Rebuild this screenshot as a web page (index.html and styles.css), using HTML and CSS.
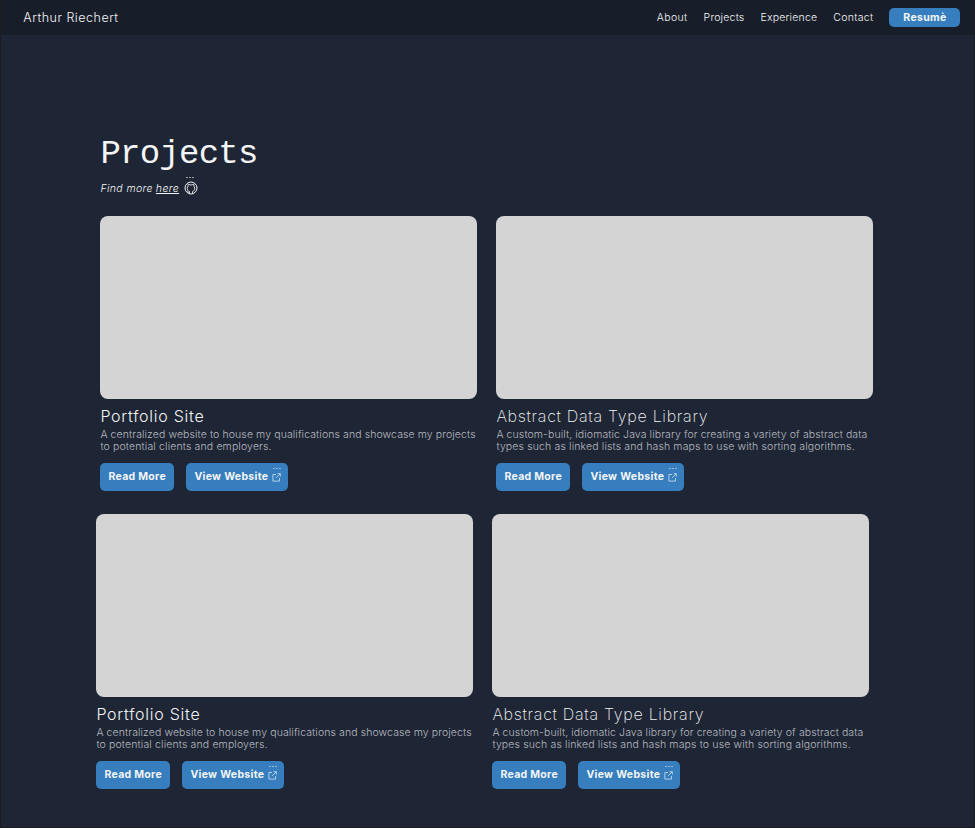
FILE: index.html
```
<!DOCTYPE html>
<html lang="en">
<head>
<meta charset="utf-8">
<title>Arthur Riechert - Projects</title>
<link rel="stylesheet" href="styles.css">
</head>
<body>
<svg class="defs" aria-hidden="true">
  <symbol id="external" viewBox="0 0 9 9"><path d="M4 1.500H.9v6.600h6.600V5M5.500.7h2.800v2.800M8.200.8 4.100 4.900" fill="none" stroke="currentColor" stroke-width=".8"/></symbol>
</svg>
<header class="nav">
  <span class="brand">Arthur Riechert</span>
  <nav class="links">
    <a class="link about">About</a><a class="link">Projects</a><a class="link">Experience</a><a class="link contact">Contact</a>
    <a class="resume">Resumè</a>
  </nav>
</header>
<main class="main">
  <h1 class="title">Projects</h1>
  <p class="more"><span>Find more</span><a class="here">here</a>
    <span class="github"><svg viewBox="0 0 14 14"><circle cx="7" cy="7" r="6" fill="none" stroke="currentColor" stroke-width="1"/><path d="M5.400 12.700v-2.300C3.900 10 3.300 8.900 3.300 7.300c0-.9.3-1.600.8-2.100-.2-.7-.1-1.400.1-2 .7 0 1.300.3 1.800.7h2c.5-.4 1.100-.7 1.800-.7.2.6.3 1.300.1 2 .5.5.8 1.200.8 2.100 0 1.600-.6 2.700-2.100 3.100v2.300M5.400 11.300c-1.100.3-1.500-.4-2.100-1" fill="none" stroke="currentColor" stroke-width=".9"/></svg><i class="dots"></i></span>
  </p>
  <section class="grid">
    <article class="card">
      <div class="thumb"></div>
      <h2 class="name">Portfolio Site</h2>
      <p class="desc">A centralized website to house my qualifications and showcase my projects<br><span class="wide">to potential clients and employers.</span></p>
      <div class="actions"><a class="btn">Read More</a><a class="btn view">View Website<span class="ext"><svg><use href="#external"/></svg><i class="dots"></i></span></a></div>
    </article>
    <article class="card">
      <div class="thumb"></div>
      <h2 class="name light">Abstract Data Type Library</h2>
      <p class="desc">A custom-built, idiomatic Java library for creating a variety of abstract data<br><span class="wide">types such as linked lists and hash maps to use with sorting algorithms.</span></p>
      <div class="actions"><a class="btn">Read More</a><a class="btn view">View Website<span class="ext"><svg><use href="#external"/></svg><i class="dots"></i></span></a></div>
    </article>
  </section>
  <section class="grid second">
    <article class="card">
      <div class="thumb"></div>
      <h2 class="name">Portfolio Site</h2>
      <p class="desc">A centralized website to house my qualifications and showcase my projects<br><span class="wide">to potential clients and employers.</span></p>
      <div class="actions"><a class="btn">Read More</a><a class="btn view">View Website<span class="ext"><svg><use href="#external"/></svg><i class="dots"></i></span></a></div>
    </article>
    <article class="card">
      <div class="thumb"></div>
      <h2 class="name light">Abstract Data Type Library</h2>
      <p class="desc">A custom-built, idiomatic Java library for creating a variety of abstract data<br><span class="wide">types such as linked lists and hash maps to use with sorting algorithms.</span></p>
      <div class="actions"><a class="btn">Read More</a><a class="btn view">View Website<span class="ext"><svg><use href="#external"/></svg><i class="dots"></i></span></a></div>
    </article>
  </section>
</main>
</body>
</html>
```
FILE: styles.css
```
*{box-sizing:border-box;margin:0}
body{width:975px;height:828px;background:#1e2534;color:#f4f5f6;font-family:Inter,"Liberation Sans",sans-serif;font-size:10.5px;border:1px solid #1a1c22;border-top:0;overflow:hidden}
.defs{position:absolute;width:0;height:0}
.nav{height:35px;background:#181d2a;display:flex;justify-content:space-between;align-items:center;padding:0 13.600px 0 22.300px}
.brand{font-size:12.500px;font-weight:300;letter-spacing:.51px}
.links{display:flex;align-items:center;gap:16px}
.link{font-weight:350;letter-spacing:.2px}
.about{letter-spacing:.36px}
.contact{letter-spacing:.3px}
.resume{width:71px;height:19px;border-radius:5px;background:#367ebd;font-weight:700;text-align:center;line-height:19px;letter-spacing:.3px}
.main{padding:97px 99px 0 99.400px}
.title{font:400 34px/44px "Liberation Mono",monospace;letter-spacing:-.75px}
.more{display:flex;align-items:center;height:14px;font-style:italic;font-weight:300;letter-spacing:.38px;margin:5px 0 21.400px}
.here{text-decoration:underline;margin:0 5px 0 3px}
.github{position:relative;width:14px;height:14px}
.github svg{display:block;width:14px;height:14px}
.dots{position:absolute;left:1px;top:-5px;width:8px;height:1px;background:repeating-linear-gradient(90deg,currentColor 0 2px,transparent 2px 3px);opacity:.6}
.github .dots{left:2px;top:-4px}
.grid{display:grid;grid-template-columns:377px 377px;column-gap:19px;height:298px}
.second{margin-left:-4px;margin-right:4px}
.thumb{height:183px;border-radius:8px;background:#d4d4d4}
.name{font-size:16px;font-weight:350;line-height:20px;margin-top:6.500px;letter-spacing:.74px;white-space:nowrap}
.light{font-weight:200;letter-spacing:.72px}
.desc{font-weight:300;line-height:12px;white-space:nowrap;margin-top:3.600px;letter-spacing:.1px;color:#b8bbc1}
.wide{letter-spacing:.14px}
.actions{display:flex;gap:12px;margin-top:10px}
.btn{width:74px;height:27.500px;border-radius:5px;background:#367ebd;font-weight:700;padding-left:8px;line-height:27.500px;letter-spacing:.31px;display:flex;align-items:center;white-space:nowrap}
.view{width:102px;justify-content:space-between;padding-right:7.500px}
.ext{position:relative;width:9px;height:9px;color:#cfe2f2}
.ext svg{display:block;width:9px;height:9px}
```
